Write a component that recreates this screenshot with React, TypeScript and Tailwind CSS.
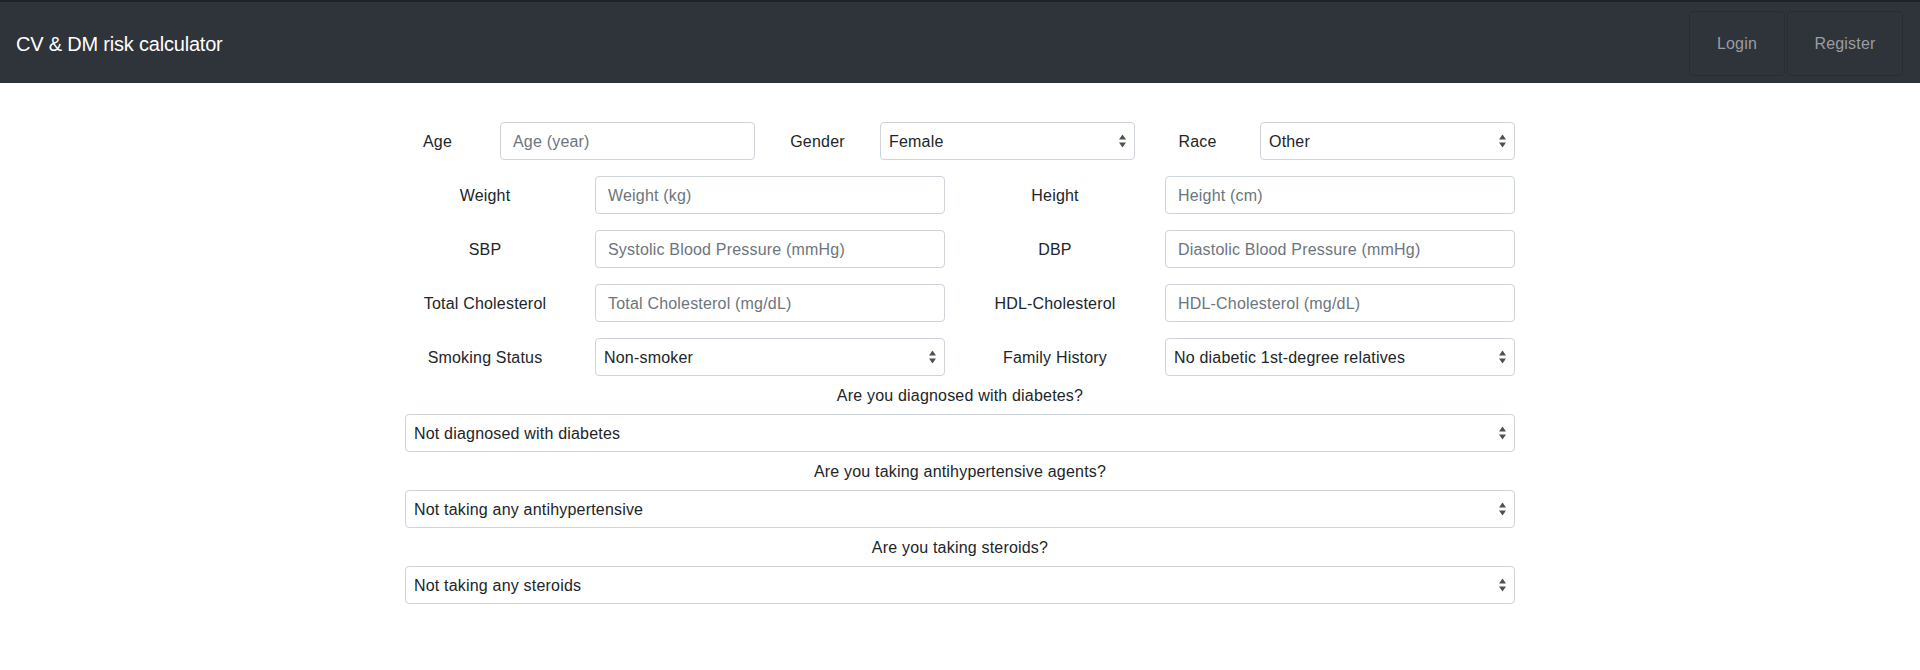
import React from "react";

function Arrows() {
  return (
    <svg width="7" height="13" viewBox="0 0 7 13" className="pointer-events-none absolute right-[9px] top-1/2 -translate-y-1/2">
      <polygon points="3.5,0 7,5 0,5" fill="#4d5154" />
      <polygon points="0,8 7,8 3.5,13" fill="#4d5154" />
    </svg>
  );
}

function Select({ value }: { value: string }) {
  return (
    <div className="relative h-[38px] w-full">
      <select
        defaultValue={value}
        className="h-full w-full appearance-none rounded-[4px] border border-[#ced4da] bg-white pl-[8px] pr-[24px] pt-[2px] text-[16px] tracking-[0.012em] text-[#212529] outline-none"
      >
        <option>{value}</option>
      </select>
      <Arrows />
    </div>
  );
}

function Input({ placeholder }: { placeholder: string }) {
  return (
    <input
      placeholder={placeholder}
      className="h-[38px] w-full rounded-[4px] border border-[#ced4da] bg-white px-[12px] pt-[2px] text-[16px] tracking-[0.012em] text-[#212529] outline-none placeholder:text-[#6c757d]"
    />
  );
}

function SmallLabel({ text }: { text: string }) {
  return <div className="flex w-[95px] items-center justify-center pt-[2px] text-center">{text}</div>;
}

function WideLabel({ text }: { text: string }) {
  return <div className="flex w-[190px] items-center justify-center pt-[2px] text-center">{text}</div>;
}

function PairRow({
  l1,
  c1,
  l2,
  c2,
  last,
}: {
  l1: string;
  c1: React.ReactNode;
  l2: string;
  c2: React.ReactNode;
  last?: boolean;
}) {
  return (
    <div className={`mx-[-15px] flex h-[38px] ${last ? "mb-[6px]" : "mb-4"}`}>
      <WideLabel text={l1} />
      <div className="w-[380px] px-[15px]">{c1}</div>
      <WideLabel text={l2} />
      <div className="w-[380px] px-[15px]">{c2}</div>
    </div>
  );
}

function Question({ q, value }: { q: string; value: string }) {
  return (
    <div className="mb-[6px]">
      <div className="mb-2 h-[24px] pt-[2px] text-center leading-[24px]">{q}</div>
      <Select value={value} />
    </div>
  );
}

export default function App() {
  return (
    <div className="min-h-screen bg-white font-['Liberation_Sans',Arial,sans-serif] text-[16px] leading-[24px] tracking-[0.012em] text-[#212529]">
      <nav className="flex h-[83px] items-center justify-between border-t-2 border-[#1f2226] bg-[#2f333a] pl-4 pr-[17px]">
        <span className="pt-[2px] text-[20px] tracking-[-0.01em] text-white">CV &amp; DM risk calculator</span>
        <div className="flex gap-[2px] pt-[2px]">
          <a className="flex h-[65px] w-[96px] items-center justify-center rounded-[4px] border border-[#292c31] pt-[1px] text-[#9a9da1]">
            Login
          </a>
          <a className="flex h-[65px] w-[116px] items-center justify-center rounded-[4px] border border-[#292c31] pt-[1px] text-[#9a9da1]">
            Register
          </a>
        </div>
      </nav>

      <main className="mx-auto w-[1110px] pt-[39px]">
        <div className="mx-[-15px] mb-4 flex h-[38px]">
          <SmallLabel text="Age" />
          <div className="w-[285px] px-[15px]">
            <Input placeholder="Age (year)" />
          </div>
          <SmallLabel text="Gender" />
          <div className="w-[285px] px-[15px]">
            <Select value="Female" />
          </div>
          <SmallLabel text="Race" />
          <div className="w-[285px] px-[15px]">
            <Select value="Other" />
          </div>
        </div>

        <PairRow l1="Weight" c1={<Input placeholder="Weight (kg)" />} l2="Height" c2={<Input placeholder="Height (cm)" />} />
        <PairRow
          l1="SBP"
          c1={<Input placeholder="Systolic Blood Pressure (mmHg)" />}
          l2="DBP"
          c2={<Input placeholder="Diastolic Blood Pressure (mmHg)" />}
        />
        <PairRow
          l1="Total Cholesterol"
          c1={<Input placeholder="Total Cholesterol (mg/dL)" />}
          l2="HDL-Cholesterol"
          c2={<Input placeholder="HDL-Cholesterol (mg/dL)" />}
        />
        <PairRow
          l1="Smoking Status"
          c1={<Select value="Non-smoker" />}
          l2="Family History"
          c2={<Select value="No diabetic 1st-degree relatives" />}
          last
        />

        <Question q="Are you diagnosed with diabetes?" value="Not diagnosed with diabetes" />
        <Question q="Are you taking antihypertensive agents?" value="Not taking any antihypertensive" />
        <Question q="Are you taking steroids?" value="Not taking any steroids" />
      </main>
    </div>
  );
}
